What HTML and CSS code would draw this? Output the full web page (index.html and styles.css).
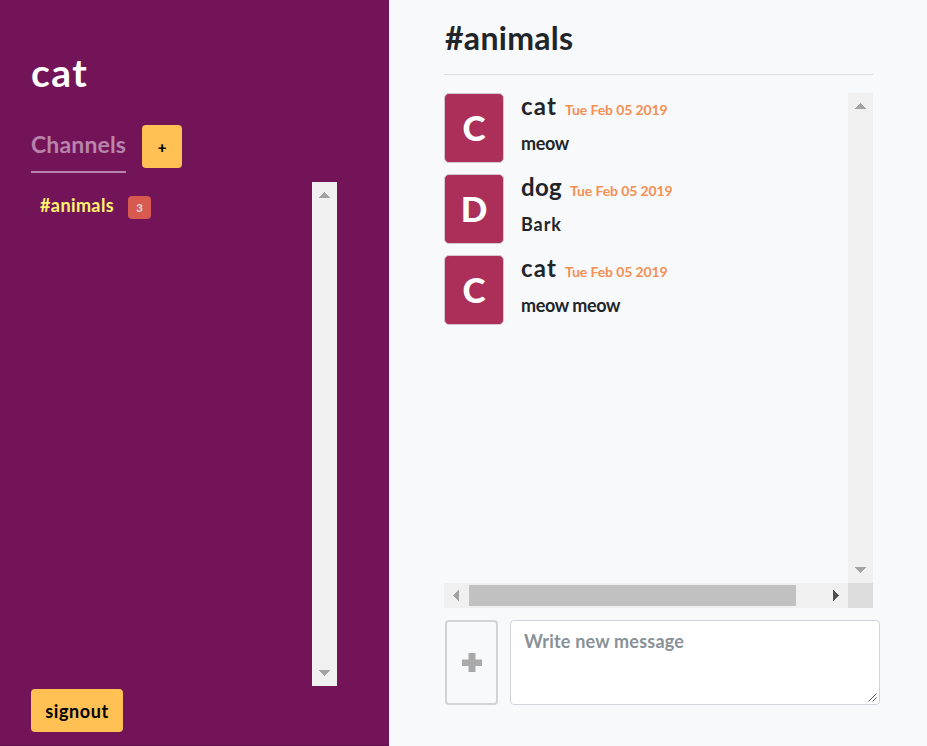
FILE: index.html
```html
<!DOCTYPE html>
<html lang="en">
<head>
<meta charset="utf-8">
<title>Chat</title>
<link rel="stylesheet" href="styles.css">
</head>
<body>
<div class="app">
  <aside class="sidebar">
    <h1 class="user"><span>cat</span></h1>
    <div class="channels-head">
      <h2 class="channels-title">Channels</h2>
      <button class="btn add">+</button>
    </div>
    <div class="channels">
      <div class="channel"><span class="channel-name">#animals</span><span class="badge">3</span></div>
      <div class="vbar">
        <svg width="11" height="6" shape-rendering="crispEdges"><path d="M0 6L5.5 0L11 6Z"/></svg>
        <svg width="11" height="6" shape-rendering="crispEdges"><path d="M0 0H11L5.5 6Z"/></svg>
      </div>
    </div>
    <button class="btn signout">signout</button>
  </aside>
  <main class="main">
    <h2 class="room"><span>#animals</span></h2>
    <div class="pane">
      <div class="messages">
        <article class="message">
          <div class="avatar">C</div>
          <div class="body"><div class="meta"><span class="name cat">cat</span><time>Tue Feb 05 2019</time></div><p class="meow">meow</p></div>
        </article>
        <article class="message">
          <div class="avatar">D</div>
          <div class="body"><div class="meta"><span class="name dog">dog</span><time>Tue Feb 05 2019</time></div><p class="bark">Bark</p></div>
        </article>
        <article class="message">
          <div class="avatar">C</div>
          <div class="body"><div class="meta"><span class="name cat">cat</span><time>Tue Feb 05 2019</time></div><p class="meow">meow meow</p></div>
        </article>
      </div>
      <div class="vbar">
        <svg width="11" height="6" shape-rendering="crispEdges"><path d="M0 6L5.5 0L11 6Z"/></svg>
        <svg width="11" height="6" shape-rendering="crispEdges"><path d="M0 0H11L5.5 6Z"/></svg>
      </div>
      <div class="hbar">
        <svg width="6" height="11" shape-rendering="crispEdges"><path d="M6 0V11L0 5.5Z"/></svg>
        <div class="thumb"></div>
        <svg class="active" width="6" height="11" shape-rendering="crispEdges"><path d="M0 0V11L6 5.5Z"/></svg>
      </div>
      <div class="corner"></div>
    </div>
    <div class="composer">
      <button class="attach" aria-label="Attach"><svg width="20" height="19"><path d="M6.5 0H13.5V6.5H20V13H13.5V19H6.5V13H0V6.5H6.5Z"/></svg></button>
      <div class="input"><span>Write new message</span>
        <svg class="grip" width="9" height="9"><path d="M.5 8.5L8.5 .5M4.5 8.5L8.5 4.5"/></svg>
      </div>
    </div>
  </main>
</div>
</body>
</html>
```
FILE: styles.css
```css
* { box-sizing: border-box; }
body { margin: 0; font-family: Lato, sans-serif; font-weight: 700; color: #212529; background: #f8f9fb; }
h1, h2, p { margin: 0; }
button { font-family: inherit; font-weight: 700; padding: 0; }
.app { display: flex; width: 927px; height: 746px; overflow: hidden; white-space: nowrap; }

.sidebar { width: 389px; flex: none; background: #731459; padding: 48px 0 0 31px; border-bottom: 1px solid #640f50; }
.user { height: 77px; font-size: 39px; line-height: 48px; color: #fff; letter-spacing: 1.5px; }
.channels-head { display: flex; height: 57px; gap: 16px; align-items: flex-start; }
.channels-title { width: 95px; height: 48px; border-bottom: 2px solid #b983ab; color: #b983ab; font-size: 23px; line-height: 38px; letter-spacing: .15px; }
.btn { display: block; border: 0; border-radius: 4px; background: #ffc153; color: #000; }
.add { width: 40px; height: 43px; font-size: 15px; font-weight: 900; }
.signout { width: 92px; height: 43px; margin-top: 3px; font-size: 18px; letter-spacing: .6px; }
.channels { display: flex; justify-content: space-between; width: 306px; height: 504px; }
.channel { display: flex; height: 46px; padding-left: 9px; }
.channel-name { width: 88px; line-height: 46px; font-size: 18px; color: #fff36d; letter-spacing: .4px; }
.badge { width: 23px; height: 23px; margin-top: 14px; border-radius: 4px; background: #d7594f; color: #dfd0d4; font-size: 12px; font-weight: 900; line-height: 23px; text-align: center; }

.vbar { display: flex; flex-direction: column; justify-content: space-between; align-items: center; width: 25px; padding: 10px 0; background: #f0f0f0; fill: #a3a3a3; }
.hbar { display: flex; align-items: center; height: 25px; padding: 0 9px; background: #f0f0f0; fill: #a3a3a3; }
.thumb { width: 327px; height: 21px; margin: 0 auto 0 10px; background: #c1c1c1; }
.active { fill: #505050; }
.corner { background: #dcdcdc; }

.main { padding: 0 0 0 55px; }
.room { width: 429px; height: 75px; padding-left: 1px; border-bottom: 1px solid #dddfe2; font-size: 32px; line-height: 75px; letter-spacing: .3px; }
.pane { display: grid; grid-template: 490px 25px / 404px 25px; margin-top: 18px; }
.message { display: flex; gap: 17px; height: 81px; }
.avatar { width: 60px; height: 70px; border: 1px solid #d3c8d0; border-radius: 5px; background: #ab2f58; color: #fff; font-size: 35px; font-weight: 900; line-height: 66px; text-align: center; }
.meta { display: flex; align-items: baseline; height: 34px; line-height: 25px; }
.name { font-size: 24px; }
.cat { width: 44px; letter-spacing: 1.2px; }
.dog { width: 49px; letter-spacing: .4px; }
time { color: #f58f53; font-size: 14px; letter-spacing: -.1px; }
.message p { line-height: 32px; font-size: 18px; }
.message .meow { letter-spacing: -.4px; }
.message .bark { letter-spacing: .9px; }
.composer { display: flex; gap: 12px; margin: 12px 0 0 1px; }
.attach { display: flex; justify-content: center; align-items: center; width: 53px; height: 85px; border: 2px solid #d2d3d5; border-radius: 4px; background: transparent; fill: #a9a9a9; }
.input { position: relative; width: 370px; height: 85px; padding: 6px 13px; border: 1px solid #ced4da; border-radius: 4px; background: #fff; color: #899198; font-size: 18px; line-height: 28px; letter-spacing: .2px; }
.grip { position: absolute; right: 2px; bottom: 2px; fill: none; stroke: #555; }
```
